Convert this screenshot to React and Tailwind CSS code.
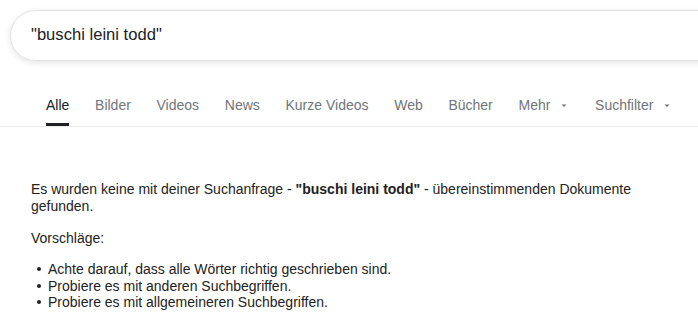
import React from 'react';

const tabs = ['Alle', 'Bilder', 'Videos', 'News', 'Kurze Videos', 'Web', 'Bücher'];

function Caret() {
  return (
    <svg width="8" height="8" viewBox="0 0 8 8" className="ml-[10px] mt-[1px]">
      <path d="M1.5 2.5h5L4 5z" fill="#70757a" />
    </svg>
  );
}

export default function App() {
  return (
    <div className="w-[698px] h-[336px] overflow-hidden bg-white font-['Liberation_Sans',Arial,sans-serif]">
      {/* Search box */}
      <div className="pt-[10px] pl-[10px]">
        <div className="w-[760px] h-[51px] rounded-l-full border border-[#dfe1e5] shadow-[0_2px_6px_rgba(32,33,36,0.12)] flex items-center pl-[20px] text-[16.6px] text-[#202124]">
          "buschi leini todd"
        </div>
      </div>

      {/* Tabs */}
      <div className="mt-[24px] border-b border-[#ebebeb]">
        <div className="flex items-end pl-[46px] gap-[25.7px] h-[41px] text-[14px] text-[#70757a]">
          {tabs.map((t) => (
            <div key={t} className={'h-full flex flex-col justify-center relative ' + (t === 'Alle' ? 'text-[#202124] font-medium' : '')}>
              <span>{t}</span>
              {t === 'Alle' && <div className="absolute left-0 right-0 bottom-0 h-[3px] bg-[#202124]" />}
            </div>
          ))}
          <div className="h-full flex items-center">
            <span>Mehr</span>
            <Caret />
          </div>
          <div className="h-full flex items-center ml-[1px]">
            <span>Suchfilter</span>
            <Caret />
          </div>
        </div>
      </div>

      {/* No results */}
      <div className="pl-[31px] pt-[54px] pr-[40px] text-[14px] leading-[17px] text-[#222]">
        <p>
          Es wurden keine mit deiner Suchanfrage - <b>"buschi leini todd"</b> - übereinstimmenden Dokumente gefunden.
        </p>
        <p className="mt-[15px]">Vorschläge:</p>
        <ul className="mt-[14px] pl-[17px] leading-[16.5px]">
          {[
            'Achte darauf, dass alle Wörter richtig geschrieben sind.',
            'Probiere es mit anderen Suchbegriffen.',
            'Probiere es mit allgemeineren Suchbegriffen.',
          ].map((s) => (
            <li key={s} className="flex items-center">
              <span className="w-[4px] h-[4px] rounded-full bg-[#222] ml-[-11px] mr-[7px]" />
              <span>{s}</span>
            </li>
          ))}
        </ul>
      </div>
    </div>
  );
}
